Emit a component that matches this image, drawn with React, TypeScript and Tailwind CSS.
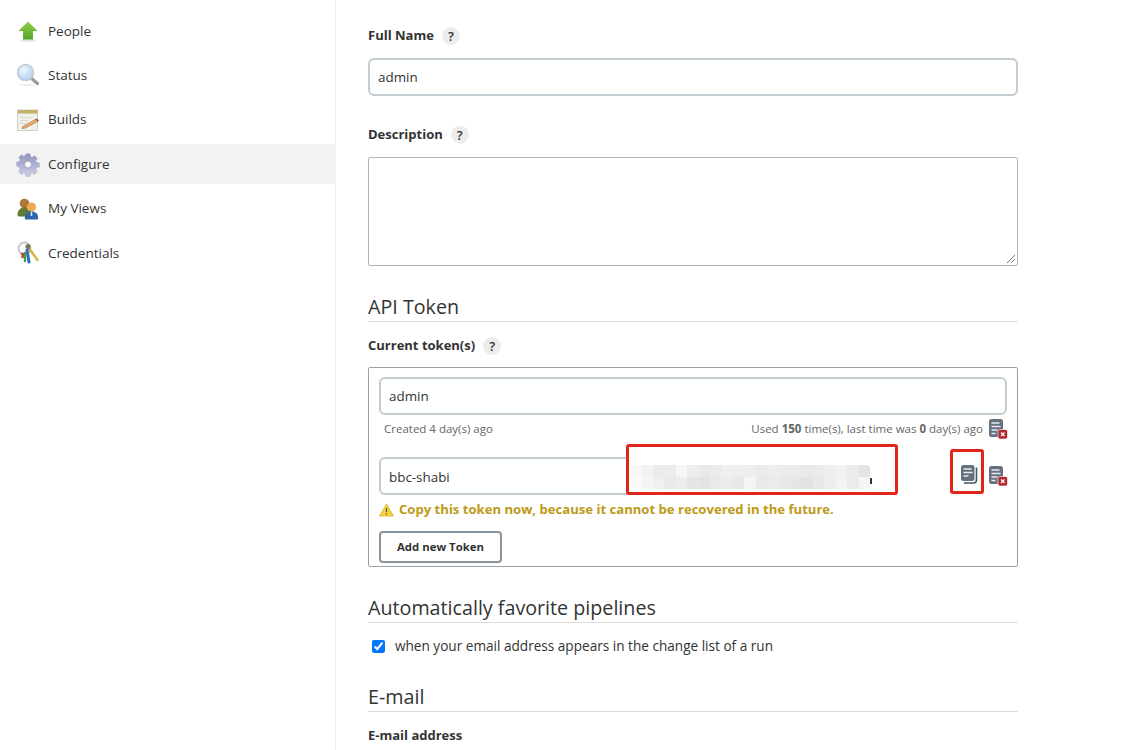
const FONT = "font-['Open_Sans','Noto_Sans',sans-serif]"

function PeopleIcon() {
  return (
    <svg width="24" height="24" viewBox="0 0 24 24">
      <defs>
        <linearGradient id="arrow" x1="0" y1="0" x2="0" y2="1">
          <stop offset="0" stopColor="#8fd04c" />
          <stop offset="1" stopColor="#55a425" />
        </linearGradient>
      </defs>
      <ellipse cx="12" cy="21.5" rx="8" ry="1.5" fill="#dfe6d8" />
      <path d="M12 2.5 L21.5 12 H17 V20.5 H7 V12 H2.5 Z" fill="url(#arrow)" />
    </svg>
  )
}

function StatusIcon() {
  return (
    <svg width="24" height="24" viewBox="0 0 24 24">
      <defs>
        <radialGradient id="lens" cx="0.4" cy="0.35" r="0.8">
          <stop offset="0" stopColor="#f0f6fd" />
          <stop offset="1" stopColor="#a4c6ec" />
        </radialGradient>
      </defs>
      <ellipse cx="11" cy="22" rx="9" ry="1.2" fill="#eceff2" />
      <path d="M15.5 15.5 L21.5 20.5" stroke="#9a9c99" strokeWidth="3.2" strokeLinecap="round" />
      <circle cx="9.5" cy="9.5" r="8" fill="url(#lens)" stroke="#c2ccd6" strokeWidth="1.6" />
    </svg>
  )
}

function BuildsIcon() {
  return (
    <svg width="24" height="24" viewBox="0 0 24 24">
      <rect x="1.5" y="2" width="20" height="20.5" fill="#f1f1ec" stroke="#cfcfc8" />
      <rect x="2" y="2" width="19.5" height="3.5" fill="#c4b06a" />
      <path d="M4 9.5h11M4 12.5h8M4 15.5h6" stroke="#d6d6d0" strokeWidth="1.2" />
      <path d="M7 18.5 L20 11 L22 13.2 L9.5 20 L6 20.5 Z" fill="#e6b06a" stroke="#a8653f" strokeWidth="0.6" />
      <path d="M19.4 11.2 L20.8 10.4 L23 12.6 L21.6 13.6 Z" fill="#c8433a" />
    </svg>
  )
}

function GearIcon() {
  return (
    <svg width="25" height="25" viewBox="0 0 24 24">
      <defs>
        <linearGradient id="gear" x1="0" y1="0" x2="0" y2="1">
          <stop offset="0" stopColor="#8f97bd" />
          <stop offset="1" stopColor="#d0cfe6" />
        </linearGradient>
      </defs>
      <path
        d="M9.8 1h4.4l.6 3.1 1.8.8 2.7-1.7 3 3-1.7 2.7.8 1.8 3.1.6v4.4l-3.1.6-.8 1.8 1.7 2.7-3 3-2.7-1.7-1.8.8-.6 3.1H9.8l-.6-3.1-1.8-.8-2.7 1.7-3-3 1.7-2.7-.8-1.8L-.5 14.6v-4.4l3.1-.6.8-1.8L1.7 5.1l3-3 2.7 1.7 1.8-.8z"
        transform="translate(1.2 0.4) scale(0.9)"
        fill="url(#gear)"
        stroke="#a0a4c2"
        strokeWidth="0.6"
      />
      <circle cx="12" cy="12" r="3.6" fill="#f4f4f7" stroke="#8f94b5" strokeWidth="0.8" />
    </svg>
  )
}

function ViewsIcon() {
  return (
    <svg width="24" height="24" viewBox="0 0 24 24">
      <circle cx="8.5" cy="6.5" r="4.8" fill="#a87a3a" />
      <path d="M1.5 18c0-5 3-7.5 7-7.5s7 2.5 7 7.5c0 1-1 1.5-2 1.5H3.5c-1 0-2-.5-2-1.5z" fill="#5f7a35" />
      <circle cx="15.5" cy="10" r="4.6" fill="#efa94e" />
      <path d="M8.8 21.5c0-5 2.6-7 6.7-7s6.7 2 6.7 7c0 .6-.6 1-1.2 1H10c-.6 0-1.2-.4-1.2-1z" fill="#2f66a8" />
      <path d="M14.8 15h1.4v4h-1.4z" fill="#e8eef5" />
    </svg>
  )
}

function CredentialsIcon() {
  return (
    <svg width="24" height="24" viewBox="0 0 24 24">
      <circle cx="8.5" cy="7.5" r="6" fill="none" stroke="#c4c6c8" strokeWidth="1.8" />
      <path d="M12 6 L18.5 15" stroke="#cf8f3f" strokeWidth="2" />
      <circle cx="12" cy="5.5" r="2.5" fill="#6f7a5a" />
      <path d="M15 10 L21.5 19" stroke="#d9b945" strokeWidth="2.6" strokeLinecap="round" />
      <path d="M5 13 L8 13 L6 17" stroke="#d43a3a" strokeWidth="2.4" fill="none" />
      <path d="M11 9 L13 21" stroke="#2f6fc0" strokeWidth="3" strokeLinecap="round" />
      <path d="M9 12 L9 20" stroke="#3fa04a" strokeWidth="2.4" strokeLinecap="round" />
    </svg>
  )
}

function RevokeIcon() {
  return (
    <svg width="20" height="22" viewBox="0 0 20 22" className="shrink-0">
      <rect x="1" y="1" width="14" height="18" rx="2.5" fill="#66717f" />
      <path d="M3.5 5h8M3.5 8.5h9M3.5 12h6M3.5 15.5h4" stroke="#e8ebef" strokeWidth="1.5" />
      <rect x="10" y="11.5" width="9.5" height="9.5" rx="2" fill="#b3262d" stroke="#fff" strokeWidth="0.6" />
      <path d="M13 14.5l3.5 3.5M16.5 14.5L13 18" stroke="#fff" strokeWidth="1.3" />
    </svg>
  )
}

function CopyIcon() {
  return (
    <svg width="19" height="21" viewBox="0 0 19 21" className="mb-[3px] shrink-0">
      <path d="M16.5 3.5V16a3 3 0 0 1-3 3H4" fill="none" stroke="#4a5562" strokeWidth="1.6" />
      <rect x="1" y="1" width="13.5" height="16" rx="2.5" fill="#65707f" />
      <path d="M3.5 5h8M3.5 8.5h9M3.5 12h5" stroke="#e8ebef" strokeWidth="1.5" />
    </svg>
  )
}

function Help() {
  return (
    <span className="inline-flex h-[18px] w-[18px] items-center justify-center rounded-full bg-[#ececec] text-[13px] font-semibold leading-none text-[#333]">?</span>
  )
}

// colours of the mosaic over the token
const TOP = ["#f8f8f8", "#f3f3f3", "#ebebeb", "#ececec", "#f6f6f6", "#ededed", "#e9e9e9", "#ebebeb", "#f0f0f0", "#eeeeee", "#ededed", "#ebebeb", "#eeeeee", "#ececec", "#ebebeb", "#e9e9e9", "#ebebeb", "#eeeeee", "#f1f1f1", "#ececec", "#e4e4e4"]
const BOTTOM = ["#fafafa", "#f5f5f5", "#f0f0f0", "#e9e9e9", "#ededed", "#e6e6e6", "#e3e3e3", "#e9e9e9", "#ebebeb", "#e8e8e8", "#f4f4f4", "#e9e9e9", "#ebebeb", "#e8e8e8", "#e6e6e6", "#e2e2e2", "#e8e8e8", "#eeeeee", "#f3f3f3", "#ebebeb", "#f5f5f5"]

function Mosaic() {
  return (
    <div className="absolute left-[630px] top-[465px] grid h-[24px] w-[240px] grid-cols-[repeat(21,1fr)] grid-rows-2 overflow-hidden rounded-r-[3px]">
      {TOP.concat(BOTTOM).map((c, i) => <div key={i} style={{ backgroundColor: c }} />)}
    </div>
  )
}

const NAV = [
  { label: "People", icon: <PeopleIcon /> },
  { label: "Status", icon: <StatusIcon /> },
  { label: "Builds", icon: <BuildsIcon /> },
  { label: "Configure", icon: <GearIcon />, active: true },
  { label: "My Views", icon: <ViewsIcon /> },
  { label: "Credentials", icon: <CredentialsIcon /> },
]

const inputCls = "flex h-[38px] items-center rounded-[6px] border-2 border-[#c3ccd1] bg-white px-[8px] text-[13.4px] text-[#333]"
const headingCls = "h-[29px] border-b border-[#dddddd] text-[19.7px] font-normal leading-[28px] text-[#333]"

export default function App() {
  return (
    <div className={`relative flex h-[750px] w-[1142px] overflow-hidden bg-white text-[#333] ${FONT}`}>
      <aside className="flex w-[336px] shrink-0 flex-col gap-[4.4px] border-r border-[#eeeeee] pt-[11px]">
        {NAV.map(n => (
          <div key={n.label} className={`flex h-[40px] items-center gap-[8px] pl-[16px] text-[13.5px] ${n.active ? "bg-[#f2f2f2]" : ""}`}>
            <span className="flex w-[24px] justify-center">{n.icon}</span>
            <span className="pb-[0.5px]">{n.label}</span>
          </div>
        ))}
      </aside>

      <main className="ml-[32px] w-[650px] shrink-0 pt-[25px]">
        <div className="flex h-[22px] items-center gap-[8px] text-[13px] font-bold">Full Name <Help /></div>
        <div className={`${inputCls} mt-[11px]`}>admin</div>

        <div className="mt-[28px] flex h-[22px] items-center gap-[8px] text-[13px] font-bold">Description <Help /></div>
        <div className="relative mt-[11px] h-[109px] rounded-[2px] border border-[#b5b5b5] bg-white">
          <svg width="10" height="10" viewBox="0 0 10 10" className="absolute bottom-[1px] right-[1px]">
            <path d="M9 1L1 9M9 5L5 9" stroke="#777" strokeWidth="1" />
          </svg>
        </div>

        <h2 className={`mt-[27px] ${headingCls}`}>API Token</h2>
        <div className="mt-[14px] flex h-[20px] items-center gap-[8px] text-[13px] font-bold">Current token(s) <Help /></div>

        <div className="relative mt-[11px] h-[200px] rounded-[2px] border border-[#9a9fa3] px-[10px] pt-[9px]">
          <div className={inputCls}>admin</div>
          <div className="mt-[4px] flex h-[20px] items-center pl-[5px] text-[11.5px] text-[#666]">
            <span>Created 4 day(s) ago</span>
            <span className="ml-auto mr-[5px]">Used <b>150</b> time(s), last time was <b>0</b> day(s) ago</span>
            <span className="mr-[-1px] flex"><RevokeIcon /></span>
          </div>
          <div className="mt-[18px] flex items-center">
            <div className={`${inputCls} w-[250px] rounded-r-none border-r-0 pt-[2px]`}>bbc-shabi</div>
            <div className="ml-auto mr-[-1px] flex items-center gap-[9px]">
              <CopyIcon />
              <RevokeIcon />
            </div>
          </div>
          <div className="mt-[5px] flex h-[20px] items-center gap-[5px] text-[13.1px] font-bold text-[#bd9a17]">
            <svg width="15" height="14" viewBox="0 0 15 14" className="shrink-0">
              <path d="M7.5 1L14.5 13H.5z" fill="#f3d13c" stroke="#d9b52a" strokeWidth="0.8" strokeLinejoin="round" />
              <path d="M7.5 5v4M7.5 10.2v1.4" stroke="#555" strokeWidth="1.2" />
            </svg>
            <span>Copy this token now, because it cannot be recovered in the future.</span>
          </div>
          <button className="mt-[11px] flex h-[32px] w-[123px] items-center justify-center rounded-[4px] border-2 border-[#8a949c] bg-white text-[11.4px] font-bold text-[#333]">Add new Token</button>
        </div>

        <h2 className={`mt-[27px] ${headingCls}`}>Automatically favorite pipelines</h2>
        <label className="mt-[13px] flex h-[20px] items-center gap-[10px] pl-[4px] text-[13.6px]">
          <input type="checkbox" defaultChecked className="mt-[1px] h-[13px] w-[13px] accent-[#0075ff]" />
          when your email address appears in the change list of a run
        </label>

        <h2 className={`mt-[27px] ${headingCls}`}>E-mail</h2>
        <div className="mt-[14px] flex h-[20px] items-center text-[13px] font-bold">E-mail address</div>
      </main>

      {/* annotations drawn over the screenshot */}
      <Mosaic />
      <div className="absolute left-[870px] top-[478px] h-[6px] w-[2px] bg-[#333]" />
      <div className="absolute left-[626px] top-[444px] h-[51px] w-[272px] rounded-[3px] border-[3px] border-[#e1251b]" />
      <div className="absolute left-[950px] top-[449px] h-[45px] w-[34px] rounded-[3px] border-[3px] border-[#e1251b]" />
    </div>
  )
}
